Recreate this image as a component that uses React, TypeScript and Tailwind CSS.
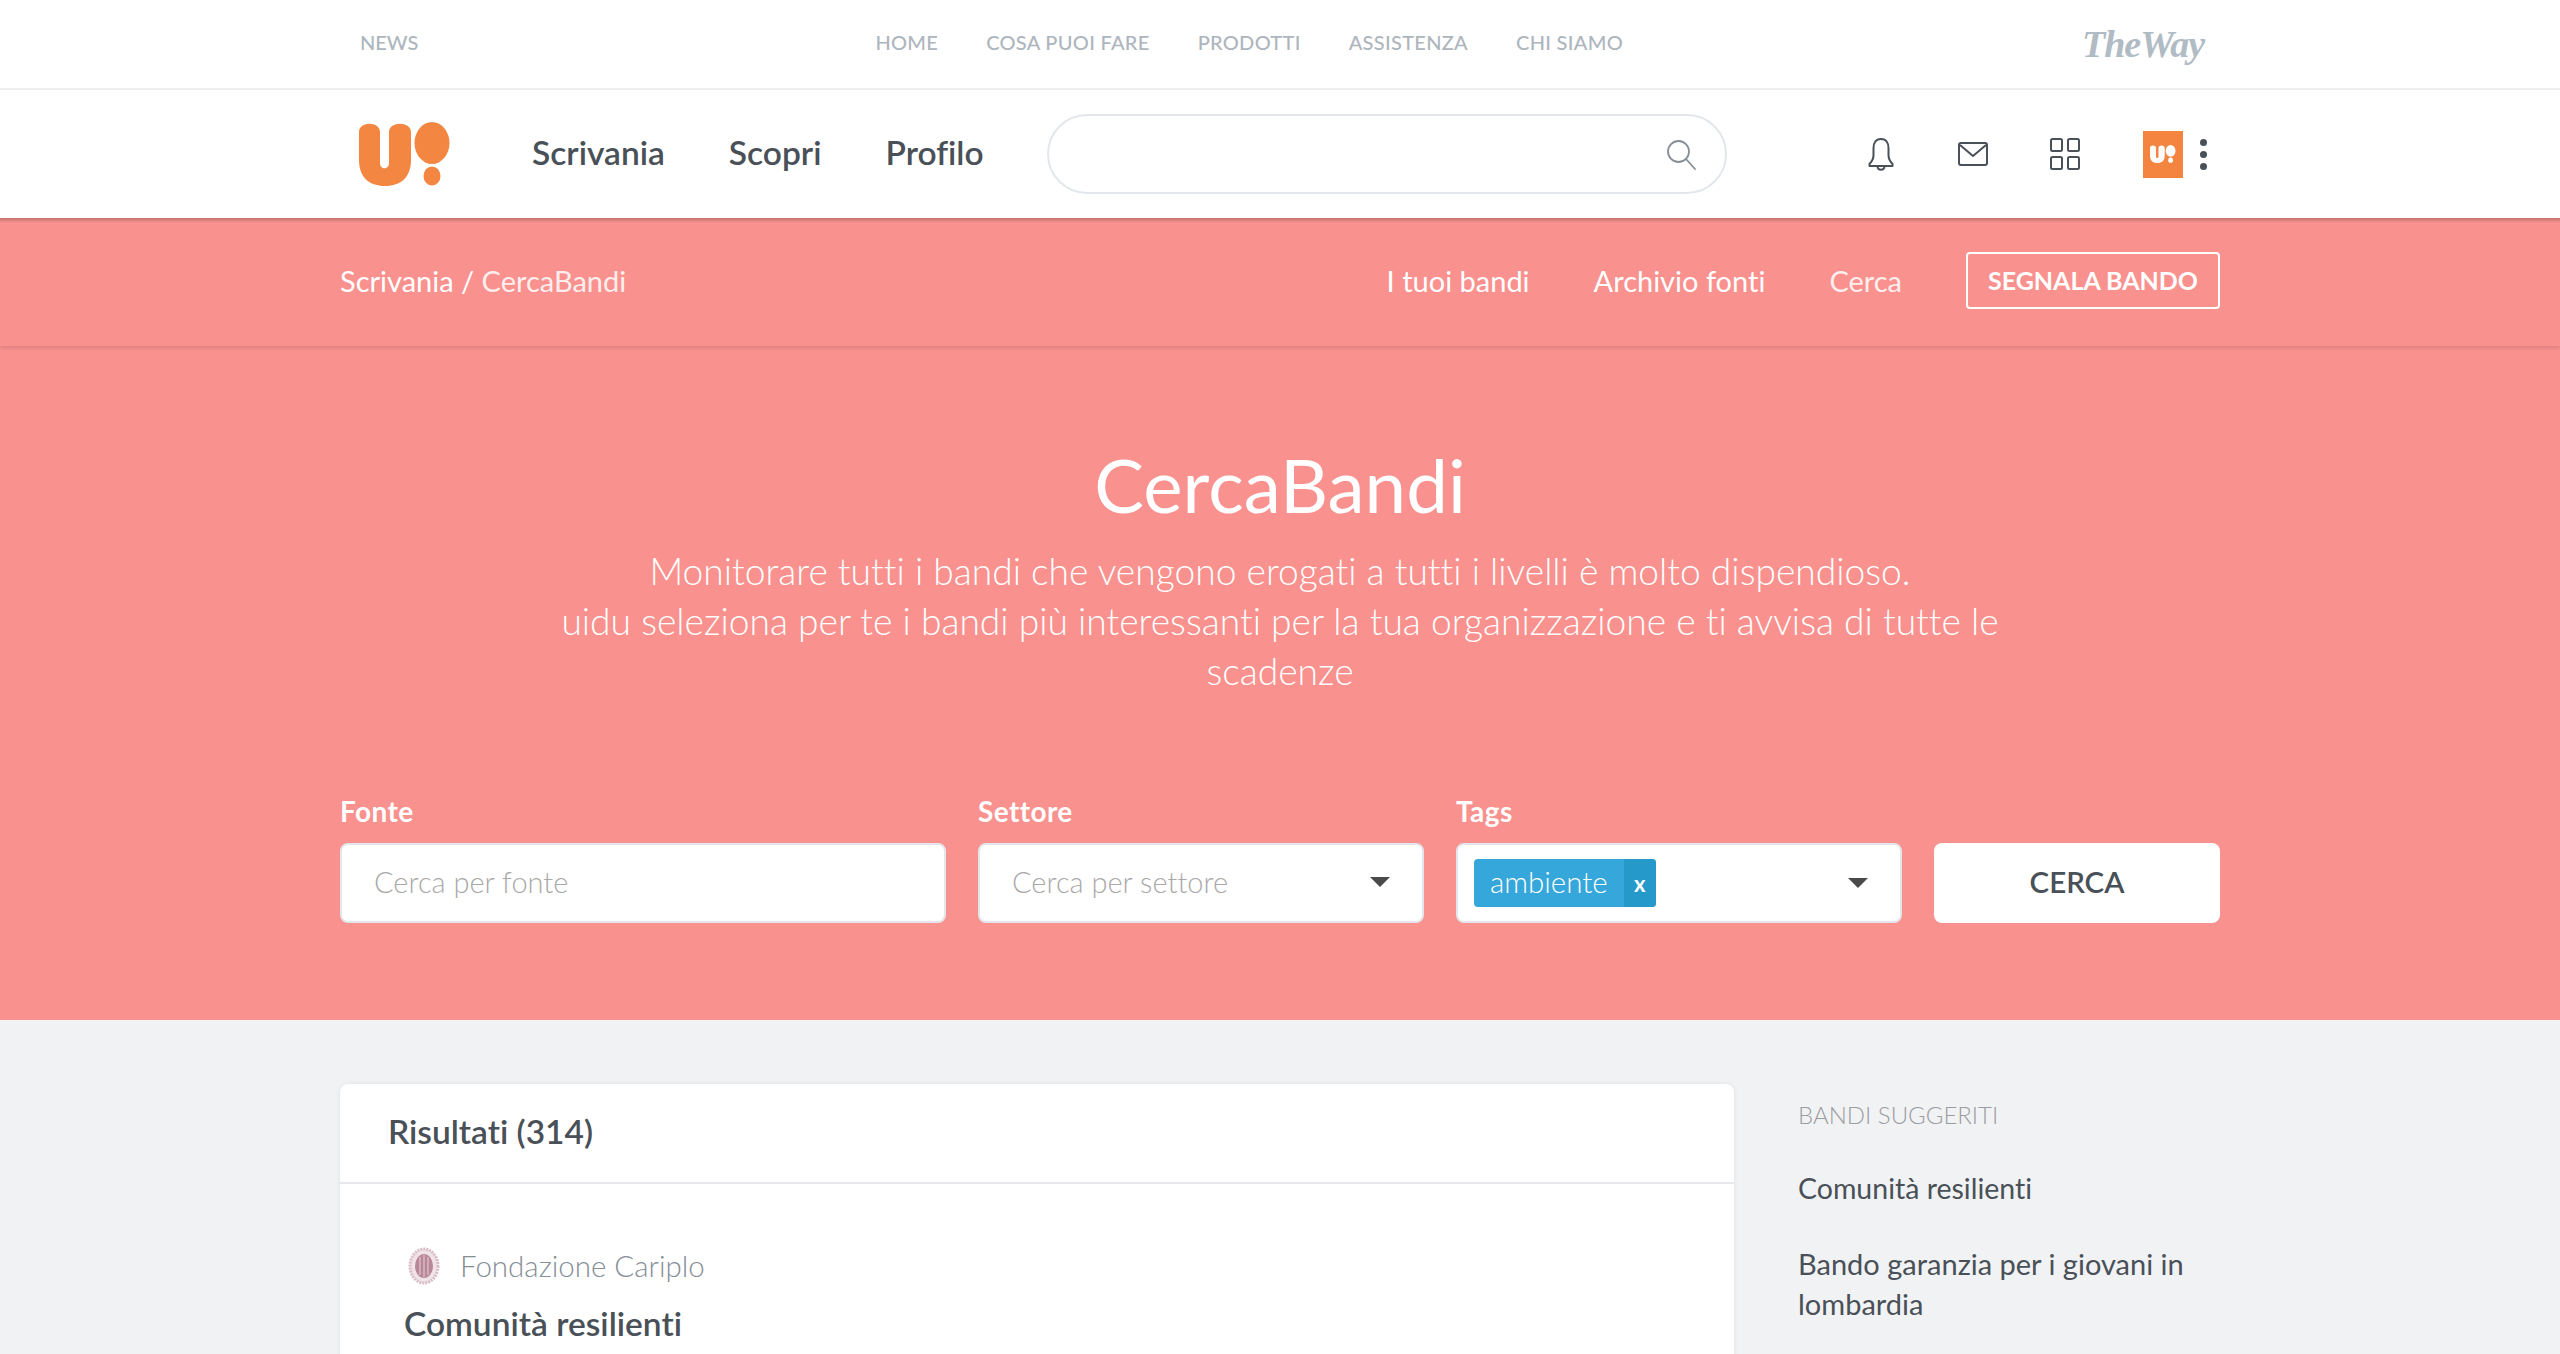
import React from "react";

const font = "font-['Lato','Noto_Sans',sans-serif] [font-variant-ligatures:none]";

const UidLogo = ({ className, color }: { className: string; color: string }) => (
    <svg className={className} viewBox="0 0 92 64" fill={color}>
        <path d="M0 10 C0 -1 21 -1 21 10 V41 C21 48 30 48 30 41 V10 C30 -1 52 -1 52 10 V38 C52 55 42 64 26 64 C10 64 0 55 0 38 Z" />
        <ellipse cx="73" cy="21" rx="17.5" ry="21" />
        <ellipse cx="73" cy="54" rx="8.5" ry="9.5" />
    </svg>
);

const SearchIcon = () => (
    <svg width="32" height="32" viewBox="0 0 32 32" fill="none" stroke="#868e96" strokeWidth="1.8">
        <circle cx="13.5" cy="13.5" r="10.5" />
        <path d="M21 21 L30 31" strokeLinecap="round" />
    </svg>
);

const BellIcon = () => (
    <svg width="26" height="34" viewBox="0 0 26 34" fill="none" stroke="#495057" strokeWidth="2" strokeLinejoin="round">
        <path d="M13 2 C7.5 2 5.5 6.5 5.5 11 V18 C5.5 22 3.5 25 1.5 27 V29 H24.5 V27 C22.5 25 20.5 22 20.5 18 V11 C20.5 6.5 18.5 2 13 2 Z" />
        <path d="M9.5 29 C9.5 34 16.5 34 16.5 29" />
    </svg>
);

const MailIcon = () => (
    <svg width="30" height="24" viewBox="0 0 30 24" fill="none" stroke="#495057" strokeWidth="2" strokeLinejoin="round">
        <rect x="1" y="1" width="28" height="22" rx="2" />
        <path d="M2 3 L15 14 L28 3" />
    </svg>
);

const GridIcon = () => (
    <svg width="30" height="34" viewBox="0 0 30 34" fill="none" stroke="#495057" strokeWidth="2">
        <rect x="1" y="2" width="11" height="12" rx="1.5" />
        <rect x="18" y="2" width="11" height="12" rx="1.5" />
        <rect x="1" y="20" width="11" height="12" rx="1.5" />
        <rect x="18" y="20" width="11" height="12" rx="1.5" />
    </svg>
);

const Caret = () => <div className="h-0 w-0 border-x-[10px] border-t-[10px] border-x-transparent border-t-[#4a4a4a]" />;

const Seal = () => (
    <svg width="32" height="38" viewBox="0 0 32 38">
        <ellipse cx="16" cy="19" rx="14" ry="17" fill="#f1e4e8" stroke="#d9bcc6" strokeWidth="3" strokeDasharray="2 1" />
        <ellipse cx="16" cy="19" rx="9" ry="12" fill="#b98797" />
        <path d="M12 10 V28 M16 8 V30 M20 10 V28" stroke="#e6d3d9" strokeWidth="1" />
    </svg>
);

const Field = ({ label, width, children }: { label: string; width: string; children: React.ReactNode }) => (
    <div className={`flex flex-col ${width}`}>
        <label className="mb-[16px] text-[28px] leading-[31px] font-bold tracking-[0.4px] text-white">{label}</label>
        {children}
    </div>
);

const App = () => {
    return (
        <div className={`h-[1354px] overflow-hidden bg-[#f1f2f4] ${font}`}>
            {/* top strip */}
            <div className="h-[90px] border-b-2 border-[#eceef0] bg-white">
                <div className="mx-auto flex h-full w-[1880px] items-center text-[20px] font-medium text-[#adb5bd]">
                    <a className="mb-[4px] ml-5">NEWS</a>
                    <div className="mb-[4px] ml-[457px] flex gap-[48px] tracking-[0.3px]">
                        <a>HOME</a>
                        <a>COSA PUOI FARE</a>
                        <a>PRODOTTI</a>
                        <a>ASSISTENZA</a>
                        <a>CHI SIAMO</a>
                    </div>
                    <span className="mr-4 ml-auto font-['Liberation_Serif',serif] text-[38px] font-bold tracking-[-1px] text-[#b0bbc4] italic">TheWay</span>
                </div>
            </div>

            {/* main nav */}
            <div className="relative z-10 h-[128px] bg-white">
                <div className="mx-auto flex h-full w-[1880px] items-center">
                    <UidLogo className="ml-[19px] h-[64px] w-[92px]" color="#f38742" />
                    <nav className="ml-[81px] flex gap-[64px] pb-[3px] text-[33.5px] font-semibold text-[#495057]">
                        <a>Scrivania</a>
                        <a>Scopri</a>
                        <a>Profilo</a>
                    </nav>
                    <div className="ml-[63px] flex h-[80px] w-[680px] items-center justify-end rounded-full border-2 border-[#e3e7ec] pr-[28px]">
                        <SearchIcon />
                    </div>
                    <div className="ml-[141px] flex w-[26px] justify-center"><BellIcon /></div>
                    <div className="ml-[64px]"><MailIcon /></div>
                    <div className="ml-[62px]"><GridIcon /></div>
                    <div className="ml-[63px] flex h-[47px] w-[40px] items-center justify-center bg-[#f38540]">
                        <UidLogo className="h-[18px] w-[26px]" color="#ffffff" />
                    </div>
                    <div className="ml-[17px] flex flex-col gap-[5px]">
                        <div className="h-[7px] w-[7px] rounded-full bg-[#495057]" />
                        <div className="h-[7px] w-[7px] rounded-full bg-[#495057]" />
                        <div className="h-[7px] w-[7px] rounded-full bg-[#495057]" />
                    </div>
                </div>
            </div>

            {/* pink section */}
            <div className="bg-[#f9918e]">
                <div className="relative h-[128px] shadow-[0_2px_4px_rgba(0,0,0,0.12)]">
                    <div className="absolute inset-x-0 top-0 h-[5px] bg-gradient-to-b from-[rgba(0,0,0,0.22)] to-transparent" />
                    <div className="mx-auto flex h-full w-[1880px] items-center pb-[3px] text-[29px] text-white">
                        <span>Scrivania / <span className="opacity-85">CercaBandi</span></span>
                        <div className="ml-auto flex items-center gap-[64px]">
                            <a>I tuoi bandi</a>
                            <a>Archivio fonti</a>
                            <a className="opacity-85">Cerca</a>
                            <button className="flex h-[57px] w-[254px] items-center justify-center rounded-[4px] border-2 border-white text-[25px] font-bold">SEGNALA BANDO</button>
                        </div>
                    </div>
                </div>

                <div className="mx-auto w-[1880px] pt-[95px] pb-[97px]">
                    <h1 className="text-center text-[74.5px] leading-[86px] font-normal text-white">CercaBandi</h1>
                    <p className="mx-auto mt-[19px] w-[1460px] text-center text-[37.2px] leading-[50px] font-light text-white">
                        Monitorare tutti i bandi che vengono erogati a tutti i livelli è molto dispendioso.
                        <br />
                        uidu seleziona per te i bandi più interessanti per la tua organizzazione e ti avvisa di tutte le scadenze
                    </p>

                    <div className="mt-[100px] flex gap-[32px]">
                        <Field label="Fonte" width="w-[606px]">
                            <div className="flex h-[80px] items-center rounded-[8px] border-2 border-[#e3e7ec] bg-white px-[32px] pb-[2px] text-[29px] font-light text-[#a9a9a9]">Cerca per fonte</div>
                        </Field>
                        <Field label="Settore" width="w-[446px]">
                            <div className="flex h-[80px] items-center justify-between rounded-[8px] border-2 border-[#e3e7ec] bg-white pr-[32px] pb-[2px] pl-[32px] text-[29px] font-light text-[#a9a9a9]">
                                Cerca per settore
                                <Caret />
                            </div>
                        </Field>
                        <Field label="Tags" width="w-[446px]">
                            <div className="flex h-[80px] items-center justify-between rounded-[8px] border-2 border-[#e3e7ec] bg-white pr-[32px] pl-[16px]">
                                <div className="flex h-[48px] items-stretch overflow-hidden rounded-[4px] bg-[#35a7db] text-white">
                                    <span className="flex items-center px-[16px] pb-[2px] text-[29.5px] font-light">ambiente</span>
                                    <span className="flex w-[32px] items-center justify-center bg-[#259aca] text-[22px] font-bold">x</span>
                                </div>
                                <Caret />
                            </div>
                        </Field>
                        <div className="flex w-[286px] flex-col justify-end">
                            <button className="h-[80px] rounded-[8px] bg-white pb-[2px] text-[29.5px] font-semibold text-[#495057]">CERCA</button>
                        </div>
                    </div>
                </div>
            </div>

            {/* results */}
            <div className="mx-auto flex w-[1880px] pt-[64px]">
                <div className="min-h-[420px] w-[1394px] rounded-t-[8px] bg-white shadow-[0_0_4px_rgba(0,0,0,0.08)]">
                    <div className="flex h-[100px] items-center border-b-2 border-[#e6e8ec] pb-[4px] pl-[48px] text-[33.5px] font-semibold text-[#495057]">Risultati (314)</div>
                    <div className="pt-[60px] pl-[64px]">
                        <div className="flex items-center gap-[20px] pl-[4px] text-[29.5px] font-light text-[#868e96]">
                            <Seal />
                            Fondazione Cariplo
                        </div>
                        <h3 className="mt-[10px] text-[33.5px] font-semibold text-[#495057]">Comunità resilienti</h3>
                    </div>
                </div>
                <aside className="ml-[64px] w-[422px] pt-[14px]">
                    <h4 className="text-[24px] leading-[34px] font-light text-[#9a9da1]">BANDI SUGGERITI</h4>
                    <ul className="mt-[36px] flex flex-col gap-[36px] text-[29px] leading-[40px] font-normal text-[#495057]">
                        <li className="text-[28.5px]">Comunità resilienti</li>
                        <li>Bando garanzia per i giovani in lombardia</li>
                    </ul>
                </aside>
            </div>
        </div>
    );
};

export default App;
